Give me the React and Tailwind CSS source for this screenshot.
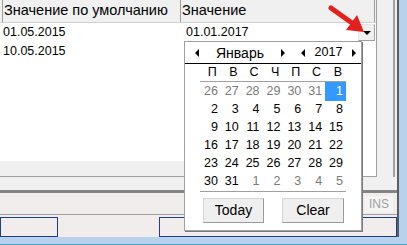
import React from "react";

const weekDays = ["П", "В", "С", "Ч", "П", "С", "В"];

// days of the month grid: [value, dimmed, selected]
const weeks = [
  [[26, 1], [27, 1], [28, 1], [29, 1], [30, 1], [31, 1], [1, 0, 1]],
  [[2], [3], [4], [5], [6], [7], [8]],
  [[9], [10], [11], [12], [13], [14], [15]],
  [[16], [17], [18], [19], [20], [21], [22]],
  [[23], [24], [25], [26], [27], [28], [29]],
  [[30], [31], [1, 1], [2, 1], [3, 1], [4, 1], [5, 1]],
];

function ArrowLeft() {
  return <span className="block w-0 h-0 border-y-[4px] border-y-transparent border-r-[4px] border-r-black" />;
}

function ArrowRight() {
  return <span className="block w-0 h-0 border-y-[4px] border-y-transparent border-l-[4px] border-l-black" />;
}

function CalendarPopup() {
  return (
    <div className="absolute left-[184px] top-[41px] w-[178px] h-[190px] bg-white border border-[#a0a0a0] shadow-[1px_1px_0_#7a7a7a] flex flex-col">
      {/* month / year navigation */}
      <div className="h-[22px] border-b border-black flex items-center pl-[10px] text-[14px] text-black">
        <ArrowLeft />
        <div className="w-[82px] text-center leading-none">Январь</div>
        <ArrowRight />
        <div className="w-[16px]" />
        <ArrowLeft />
        <div className="w-[47px] text-center text-[12.5px] leading-none">2017</div>
        <ArrowRight />
      </div>

      <div className="mx-[15px]">
        <div className="grid grid-cols-7 h-[18px] border-b border-[#a0a0a0] items-center text-[12.5px]">
          {weekDays.map((d, i) => (
            <div key={i} className="text-right pr-[4px] leading-none">{d}</div>
          ))}
        </div>
        {weeks.map((week, wi) => (
          <div key={wi} className="grid grid-cols-7 h-[18px] text-[12.5px]">
            {week.map(([n, dim, sel], di) => (
              <div
                key={di}
                className={
                  sel
                    ? "bg-[#3399ff] text-white text-right pr-[3px] h-[19px] flex items-center justify-end"
                    : dim
                    ? "text-[#7a7a7a] text-right pr-[3px] flex items-center justify-end"
                    : "text-black text-right pr-[3px] flex items-center justify-end"
                }
              >
                {n}
              </div>
            ))}
          </div>
        ))}
        <div className="border-t border-[#a0a0a0] mt-[1px]" />
        <div className="flex justify-between pl-[3px] pr-[2px] mt-[6px] text-[14px]">
          <button className="w-[61px] h-[25px] bg-[#efefef] border border-[#d4d4d4] border-r-[#9a9a9a] border-b-[#9a9a9a] text-black">
            Today
          </button>
          <button className="w-[62px] h-[25px] bg-[#efefef] border border-[#d4d4d4] border-r-[#9a9a9a] border-b-[#9a9a9a] text-black">
            Clear
          </button>
        </div>
      </div>
    </div>
  );
}

export default function App() {
  return (
    <div className="relative w-[407px] h-[245px] overflow-hidden bg-[#f0f0f0] flex flex-col font-['Liberation_Sans',Arial,sans-serif] text-black">
      <div className="flex flex-1 min-h-0">
        <div className="w-[397px] flex flex-col">
          {/* grid panel */}
          <div className="h-[193px] flex flex-col border-b-[3px] border-[#858585]">
            <div className="flex h-[177px]">
              <div className="w-[377px] flex flex-col bg-white border-r border-b border-[#a0a0a0]">
                <div className="h-[23px] flex bg-[#f0f0f0] border-b border-[#d0d0d0] text-[14.5px]">
                  <div className="w-[2px]" />
                  <div className="w-[178px] border-l border-[#a0a0a0] pl-[1px] flex items-center">
                    Значение по умолчанию
                  </div>
                  <div className="w-[195px] border-l border-r border-[#a0a0a0] pl-[1px] flex items-center">
                    Значение
                  </div>
                </div>
                <div className="h-[19px] flex items-center text-[12.5px]">
                  <div className="w-[181px] pl-[3px]">01.05.2015</div>
                  <div className="flex-1 flex items-center pl-[5px] pr-[1px]">
                    <span>01.01.2017</span>
                    <div className="ml-auto w-[17px] h-[17px] bg-[#f0f0f0] border border-[#e6e6e6] border-r-[#a0a0a0] border-b-[#a0a0a0] flex items-center justify-center">
                      <span className="block w-0 h-0 border-x-[4px] border-x-transparent border-t-[4px] border-t-black" />
                    </div>
                  </div>
                </div>
                <div className="h-[19px] flex items-center text-[12.5px]">
                  <div className="w-[181px] pl-[3px]">10.05.2015</div>
                </div>
                <div className="flex-1" />
                <div className="h-[15px] flex">
                  <div className="flex-1 bg-[#f0f0f0]" />
                  <div className="w-[14px] bg-white" />
                </div>
              </div>
              <div className="flex-1 flex">
                <div className="w-[16px] bg-[#f0f0f0]" />
                <div className="w-[2px] bg-[#a0a0a0]" />
                <div className="w-[2px] bg-[#f0f0f0]" />
              </div>
            </div>
            <div className="flex-1 bg-[#f0f0f0]" />
          </div>

          {/* mode panel */}
          <div className="h-[21px] bg-[#f0edec] flex items-center justify-end pr-[4px]">
            <div className="w-[28px] h-[16px] bg-[#f4f4f4] text-[12px] text-[#a0a0a0] flex items-center justify-center">
              INS
            </div>
          </div>

          {/* status bar */}
          <div className="flex-1 border-t border-[#a0a0a0] pt-[2px] bg-[#f0edec] flex">
            <div className="w-[58px] h-[20px] border border-[#1a3d96]" />
            <div className="w-[101px]" />
            <div className="flex-1 h-[20px] border border-[#1a3d96]" />
          </div>
        </div>
        <div className="flex-1 border-l-2 border-[#5e5e5e] bg-[#b9d1ea]" />
      </div>
      <div className="h-[8px] bg-[#b9d1ea] border-b border-[#38a3c4]" />

      <CalendarPopup />

      {/* red pointer arrow */}
      <svg className="absolute left-[325px] top-[4px]" width="45" height="35" viewBox="325 4 45 35">
        <line x1="331" y1="8" x2="352" y2="23" stroke="#e3201c" strokeWidth="5" strokeLinecap="round" />
        <polygon points="364,32 346,30 357,15" fill="#e3201c" />
      </svg>
    </div>
  );
}
